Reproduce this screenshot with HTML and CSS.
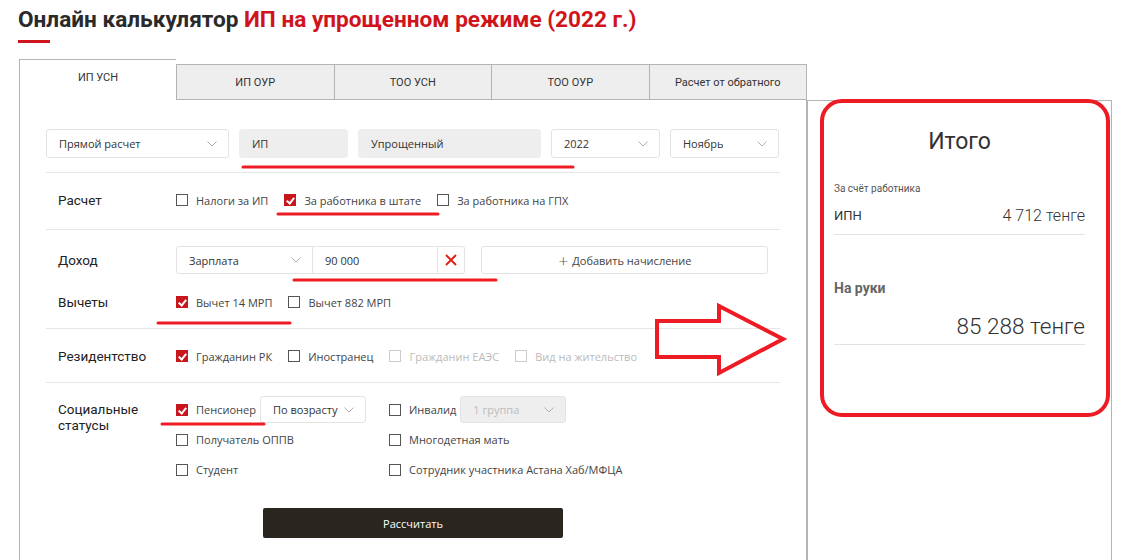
FILE: index.html
```html
<!DOCTYPE html>
<html lang="ru">
<head>
  <meta charset="UTF-8">
  <title>Калькулятор ИП УСН</title>
  <link rel="stylesheet" href="styles.css">
</head>
<body>
  <h1 class="title">Онлайн калькулятор <span>ИП на упрощенном режиме (2022 г.)</span></h1>
  <div class="title-line"></div>

  <div class="calc">
    <div class="main">
      <div class="tabs">
        <div class="tab active">ИП УСН</div>
        <div class="tab">ИП ОУР</div>
        <div class="tab">ТОО УСН</div>
        <div class="tab">ТОО ОУР</div>
        <div class="tab">Расчет от обратного</div>
      </div>

      <div class="panel">
        <div class="top-row">
          <div class="field wide">Прямой расчет <svg class="chev" viewBox="0 0 10 6"><path d="M0.5 0.5L5 5L9.5 0.5"/></svg></div>
          <div class="field narrow disabled">ИП</div>
          <div class="field wide disabled">Упрощенный</div>
          <div class="field narrow">2022 <svg class="chev" viewBox="0 0 10 6"><path d="M0.5 0.5L5 5L9.5 0.5"/></svg></div>
          <div class="field narrow">Ноябрь <svg class="chev" viewBox="0 0 10 6"><path d="M0.5 0.5L5 5L9.5 0.5"/></svg></div>
        </div>

        <div class="section s-calc">
          <div class="row">
            <div class="label">Расчет</div>
            <div class="opts">
              <label class="check"><span class="box"></span>Налоги за ИП</label>
              <label class="check"><span class="box on"></span>За работника в штате</label>
              <label class="check"><span class="box"></span>За работника на ГПХ</label>
            </div>
          </div>
        </div>

        <div class="section s-income">
          <div class="row">
            <div class="label">Доход</div>
            <div class="opts">
              <div class="income">
                <div class="field inc-type">Зарплата <svg class="chev" viewBox="0 0 10 6"><path d="M0.5 0.5L5 5L9.5 0.5"/></svg></div>
                <div class="field inc-sum">90 000</div>
                <div class="field inc-del"><svg viewBox="0 0 12 12"><path d="M1 1L11 11M11 1L1 11"/></svg></div>
              </div>
              <div class="field add-btn"><span class="plus">+</span> Добавить начисление</div>
            </div>
          </div>
          <div class="row deduct">
            <div class="label">Вычеты</div>
            <div class="opts">
              <label class="check"><span class="box on"></span>Вычет 14 МРП</label>
              <label class="check"><span class="box"></span>Вычет 882 МРП</label>
            </div>
          </div>
        </div>

        <div class="section s-res">
          <div class="row">
            <div class="label">Резидентство</div>
            <div class="opts">
              <label class="check"><span class="box on"></span>Гражданин РК</label>
              <label class="check"><span class="box"></span>Иностранец</label>
              <label class="check off"><span class="box"></span>Гражданин ЕАЭС</label>
              <label class="check off"><span class="box"></span>Вид на жительство</label>
            </div>
          </div>
        </div>

        <div class="section s-social">
          <div class="row top">
            <div class="label">Социальные статусы</div>
            <div class="social">
              <div class="cell">
                <label class="check"><span class="box on"></span>Пенсионер</label>
                <div class="field mini">По возрасту <svg class="chev" viewBox="0 0 10 6"><path d="M0.5 0.5L5 5L9.5 0.5"/></svg></div>
              </div>
              <div class="cell">
                <label class="check"><span class="box"></span>Инвалид</label>
                <div class="field mini disabled">1 группа <svg class="chev" viewBox="0 0 10 6"><path d="M0.5 0.5L5 5L9.5 0.5"/></svg></div>
              </div>
              <div class="cell"><label class="check"><span class="box"></span>Получатель ОППВ</label></div>
              <div class="cell"><label class="check"><span class="box"></span>Многодетная мать</label></div>
              <div class="cell"><label class="check"><span class="box"></span>Студент</label></div>
              <div class="cell"><label class="check"><span class="box"></span>Сотрудник участника Астана Хаб/МФЦА</label></div>
            </div>
          </div>
          <button class="calc-btn">Рассчитать</button>
        </div>
      </div>
    </div>

    <div class="result">
      <div class="res-title">Итого</div>
      <div class="res-note">За счёт работника</div>
      <div class="res-line">
        <span>ИПН</span>
        <span class="res-val">4 712 тенге</span>
      </div>
      <div class="res-hand">На руки</div>
      <div class="res-total">85 288 тенге</div>
    </div>
  </div>

  <!-- red marks drawn on top of the screenshot -->
  <svg class="marks" width="1122" height="560" viewBox="0 0 1122 560">
    <g fill="none" stroke="#ed1c24" stroke-linecap="round">
      <path d="M243 167L573 167" stroke-width="3"/>
      <path d="M278 214L438 214" stroke-width="3"/>
      <path d="M294 280L496 280" stroke-width="3"/>
      <path d="M158 323L290 323" stroke-width="3"/>
      <path d="M162 424L264 424" stroke-width="3"/>
      <path d="M657 321L719 321L719 306L783 339L719 373L719 357L657 357Z" stroke-width="4" stroke-linejoin="miter"/>
      <rect x="822" y="101" width="286" height="314" rx="20" stroke-width="4"/>
    </g>
  </svg>
</body>
</html>
```

FILE: styles.css
```css
body {
  margin: 0;
  padding: 0 0 0 18px;
  position: relative;
  background: #fff;
  color: #333;
  font-family: "Open Sans", Arial, sans-serif;
}
.title {
  margin: 7px 0 0;
  font-family: Roboto, Arial, sans-serif;
  font-size: 22.6px;
  font-weight: 700;
  line-height: 26px;
  color: #2a2a2a;
}
.title span {
  color: #d0141c;
}
.title-line {
  width: 32px;
  height: 3px;
  background: #d0141c;
  margin-top: 7px;
}

.calc {
  display: flex;
  margin-top: 16px;
  margin-left: 1px;
}
.main {
  width: 788px;
}
.tabs {
  display: flex;
  align-items: flex-end;
  height: 41px;
}
.tab {
  flex: 1;
  height: 34px;
  display: flex;
  align-items: center;
  justify-content: center;
  background: #eee;
  border: 1px solid #b4b4b4;
  border-right: none;
  font-family: Roboto, Arial, sans-serif;
  font-size: 11px;
  color: #333;
}
.tab:last-child {
  border-right: 1px solid #b4b4b4;
}
.tab.active {
  height: 41px;
  background: #fff;
  border-bottom: none;
  padding-bottom: 6px;
  box-sizing: border-box;
  flex: 0 0 157px;
}
.panel {
  border-left: 1px solid #b4b4b4;
  border-right: 1px solid #b4b4b4;
  padding: 29px 26px 40px;
}

.field {
  height: 29px;
  box-sizing: border-box;
  border: 1px solid #e3e3e3;
  border-radius: 3px;
  display: flex;
  align-items: center;
  justify-content: space-between;
  padding: 0 11px 0 12px;
  font-size: 11px;
  color: #333;
  background: #fff;
}
.field.disabled {
  background: #eee;
  border-color: #eee;
}
.chev {
  width: 10px;
  height: 6px;
}
.chev path {
  fill: none;
  stroke: #b0b0b0;
  stroke-width: 1;
}
.top-row {
  display: flex;
  gap: 10px;
  margin-bottom: 14px;
}
.top-row .wide {
  width: 183px;
}
.top-row .narrow {
  width: 109px;
}

.section {
  border-top: 1px solid #e6e6e6;
}
.s-calc {
  padding: 17px 0 19px;
}
.s-income {
  padding: 16px 0 16px;
}
.s-res {
  padding: 17px 0 16px;
}
.s-social {
  padding: 13px 0 0;
  display: flex;
  flex-direction: column;
  align-items: center;
}
.s-social .row {
  align-self: stretch;
}
.row {
  display: flex;
  align-items: center;
  min-height: 20px;
}
.row.top {
  align-items: flex-start;
}
.row.deduct {
  margin-top: 18px;
}
.label {
  width: 118px;
  flex: none;
  padding-left: 12px;
  font-family: Roboto, Arial, sans-serif;
  font-size: 13.5px;
  font-weight: 400;
  line-height: 16px;
  color: #222;
}
.row.top .label {
  padding-top: 5px;
}
.opts {
  display: flex;
  align-items: center;
}

.check {
  display: inline-flex;
  align-items: center;
  gap: 8px;
  margin-right: 16px;
  font-size: 11px;
  color: #444;
  white-space: nowrap;
}
.box {
  width: 12px;
  height: 12px;
  box-sizing: border-box;
  border: 1px solid #555;
  background: #fff;
  position: relative;
  flex: none;
}
.box.on {
  background: #c8161d;
  border-color: #c8161d;
}
.box.on::after {
  content: "";
  position: absolute;
  left: 3px;
  top: 1px;
  width: 3px;
  height: 6px;
  border: solid #fff;
  border-width: 0 2px 2px 0;
  transform: rotate(40deg);
}
.check.off {
  color: #bbb;
}
.check.off .box {
  border-color: #ccc;
}

.income {
  display: flex;
}
.income .field {
  height: 28px;
  border-radius: 0;
}
.inc-type {
  width: 137px;
  border-radius: 3px 0 0 3px !important;
}
.inc-sum {
  width: 125px;
  border-left: none;
}
.inc-del {
  width: 27px;
  border-left: none;
  border-radius: 0 3px 3px 0 !important;
  justify-content: center;
  padding: 0;
}
.inc-del svg {
  width: 12px;
  height: 12px;
}
.inc-del path {
  stroke: #e2231a;
  stroke-width: 2;
}
.add-btn {
  width: 287px;
  height: 28px;
  margin-left: 16px;
  justify-content: center;
  color: #444;
}
.plus {
  font-size: 17px;
  font-weight: 300;
  margin-right: 4px;
  line-height: 1;
  color: #555;
}

.social {
  display: grid;
  grid-template-columns: 213px 1fr;
  grid-auto-rows: 27px;
  row-gap: 3px;
}
.cell {
  display: flex;
  align-items: center;
}
.cell .check {
  margin-right: 4px;
}
.field.mini {
  width: 106px;
  height: 27px;
}
.field.mini.disabled {
  color: #bbb;
  border-color: #e3e3e3;
}
.calc-btn {
  margin-top: 25px;
  width: 300px;
  height: 30px;
  border: none;
  border-radius: 2px;
  background: #2a251f;
  color: #fff;
  font-family: "Open Sans", Arial, sans-serif;
  font-size: 11px;
}

.result {
  width: 305px;
  margin-top: 41px;
  border: 1px solid #b4b4b4;
  border-bottom: none;
  padding: 0 26px;
  box-sizing: border-box;
  font-family: Roboto, Arial, sans-serif;
}
.res-title {
  margin-top: 29px;
  text-align: center;
  font-size: 23px;
  line-height: 24px;
  color: #333;
}
.res-note {
  margin-top: 28px;
  font-size: 10px;
  line-height: 14px;
  color: #555;
}
.res-line {
  display: flex;
  justify-content: space-between;
  align-items: center;
  margin-top: 11px;
  padding-bottom: 9px;
  line-height: 18px;
  border-bottom: 1px solid #e3e3e3;
  font-size: 13px;
}
.res-val {
  font-size: 16px;
  font-weight: 300;
}
.res-hand {
  margin-top: 44px;
  font-size: 14px;
  font-weight: 700;
  line-height: 18px;
  color: #666;
}
.res-total {
  margin-top: 17px;
  padding-bottom: 6px;
  border-bottom: 1px solid #e3e3e3;
  text-align: right;
  font-size: 22.5px;
  font-weight: 300;
  line-height: 24px;
  color: #333;
}

.marks {
  position: absolute;
  left: 0;
  top: 0;
  pointer-events: none;
}
```
